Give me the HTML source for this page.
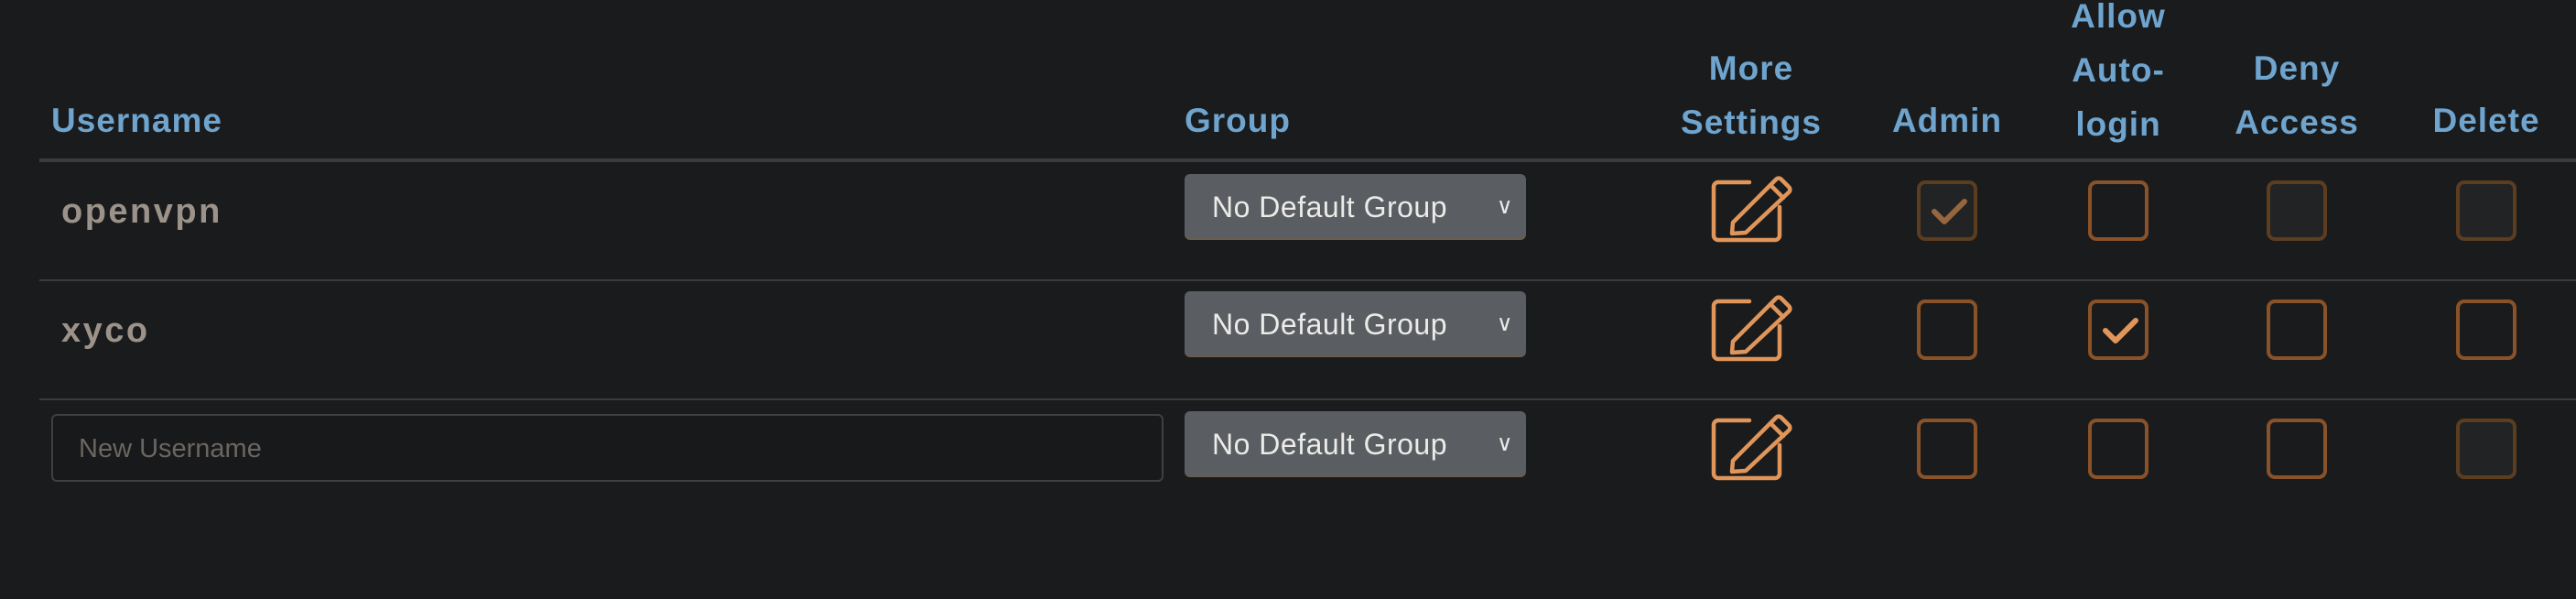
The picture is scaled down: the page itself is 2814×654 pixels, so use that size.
<!DOCTYPE html>
<html><head><meta charset="utf-8"><style>
html,body{margin:0;padding:0;background:#1a1b1d;width:2814px;height:654px;overflow:hidden;font-family:"Liberation Sans",sans-serif;}
.a{position:absolute}
.h{color:#6ea4cd;font-size:37px;font-weight:bold;line-height:59px;text-align:center;letter-spacing:1px}
.line{position:absolute;left:43px;right:0;background:#3a3b3e}
.u{color:#9b9389;font-size:38px;font-weight:bold;letter-spacing:2.5px}
.sel{position:absolute;left:1294px;width:373px;height:72px;background:#5a5e62;border-radius:6px;border-bottom:2px solid #6b5d4c;box-sizing:border-box;color:#ecebe8;font-size:32px;line-height:72px;padding-left:30px;letter-spacing:0.5px}
.sel span{position:absolute;right:14px;top:0;font-size:24px}
.cb{position:absolute;width:66px;height:66px;box-sizing:border-box;border:4px solid #8a5228;border-radius:9px}
.dim{border-color:#5c3d20;background:#222325}
</style></head><body>
<div class="a h" style="left:56px;top:102px;text-align:left">Username</div>
<div class="a h" style="left:1294px;top:102px;text-align:left">Group</div>
<div class="a h" style="left:1813px;top:45px;width:200px">More<br>Settings</div>
<div class="a h" style="left:2027px;top:102px;width:200px">Admin</div>
<div class="a h" style="left:2214px;top:-12px;width:200px">Allow<br>Auto-<br>login</div>
<div class="a h" style="left:2409px;top:45px;width:200px">Deny<br>Access</div>
<div class="a h" style="left:2616px;top:102px;width:200px">Delete</div>

<div class="line" style="top:173px;height:4px"></div>
<div class="line" style="top:305px;height:2px"></div>
<div class="line" style="top:435px;height:2px"></div>

<div class="a u" style="left:67px;top:210px">openvpn</div>
<div class="a u" style="left:67px;top:340px">xyco</div>
<div class="a" style="left:56px;top:452px;width:1215px;height:74px;box-sizing:border-box;border:2px solid #3e4043;border-radius:6px;background:#18191b;color:#6b6660;font-size:29px;line-height:72px;padding-left:28px">New Username</div>

<div class="sel" style="top:190px">No Default Group<span>&#8744;</span></div>
<div class="sel" style="top:318px">No Default Group<span>&#8744;</span></div>
<div class="sel" style="top:449px">No Default Group<span>&#8744;</span></div>

<svg class="a" style="left:1868px;top:186px" width="94" height="82" viewBox="0 0 94 82"><g fill="none" stroke="#e0965a" stroke-width="4.5" stroke-linejoin="round" stroke-linecap="round"><path d="M43 13H9a5 5 0 0 0-5 5v53a5 5 0 0 0 5 5h62a5 5 0 0 0 5-5V40"/><path d="M24 69l1-12L72 10a4 4 0 0 1 6 0l8 8a4 4 0 0 1 0 6L39 68z"/><path d="M66 16l14 14"/></g></svg>
<svg class="a" style="left:1868px;top:316px" width="94" height="82" viewBox="0 0 94 82"><g fill="none" stroke="#e0965a" stroke-width="4.5" stroke-linejoin="round" stroke-linecap="round"><path d="M43 13H9a5 5 0 0 0-5 5v53a5 5 0 0 0 5 5h62a5 5 0 0 0 5-5V40"/><path d="M24 69l1-12L72 10a4 4 0 0 1 6 0l8 8a4 4 0 0 1 0 6L39 68z"/><path d="M66 16l14 14"/></g></svg>
<svg class="a" style="left:1868px;top:446px" width="94" height="82" viewBox="0 0 94 82"><g fill="none" stroke="#e0965a" stroke-width="4.5" stroke-linejoin="round" stroke-linecap="round"><path d="M43 13H9a5 5 0 0 0-5 5v53a5 5 0 0 0 5 5h62a5 5 0 0 0 5-5V40"/><path d="M24 69l1-12L72 10a4 4 0 0 1 6 0l8 8a4 4 0 0 1 0 6L39 68z"/><path d="M66 16l14 14"/></g></svg>

<div class="cb dim" style="left:2094px;top:197px"><svg width="58" height="58" style="position:absolute;left:0;top:0"><path d="M15 30l11 11 22-22" fill="none" stroke="#96673f" stroke-width="6" stroke-linecap="round" stroke-linejoin="round"/></svg></div>
<div class="cb" style="left:2281px;top:197px"></div>
<div class="cb dim" style="left:2476px;top:197px"></div>
<div class="cb dim" style="left:2683px;top:197px"></div>
<div class="cb" style="left:2094px;top:327px"></div>
<div class="cb" style="left:2281px;top:327px"><svg width="58" height="58" style="position:absolute;left:0;top:0"><path d="M15 30l11 11 22-22" fill="none" stroke="#e0965a" stroke-width="6" stroke-linecap="round" stroke-linejoin="round"/></svg></div>
<div class="cb" style="left:2476px;top:327px"></div>
<div class="cb" style="left:2683px;top:327px"></div>
<div class="cb" style="left:2094px;top:457px"></div>
<div class="cb" style="left:2281px;top:457px"></div>
<div class="cb" style="left:2476px;top:457px"></div>
<div class="cb dim" style="left:2683px;top:457px"></div>
</body></html>
